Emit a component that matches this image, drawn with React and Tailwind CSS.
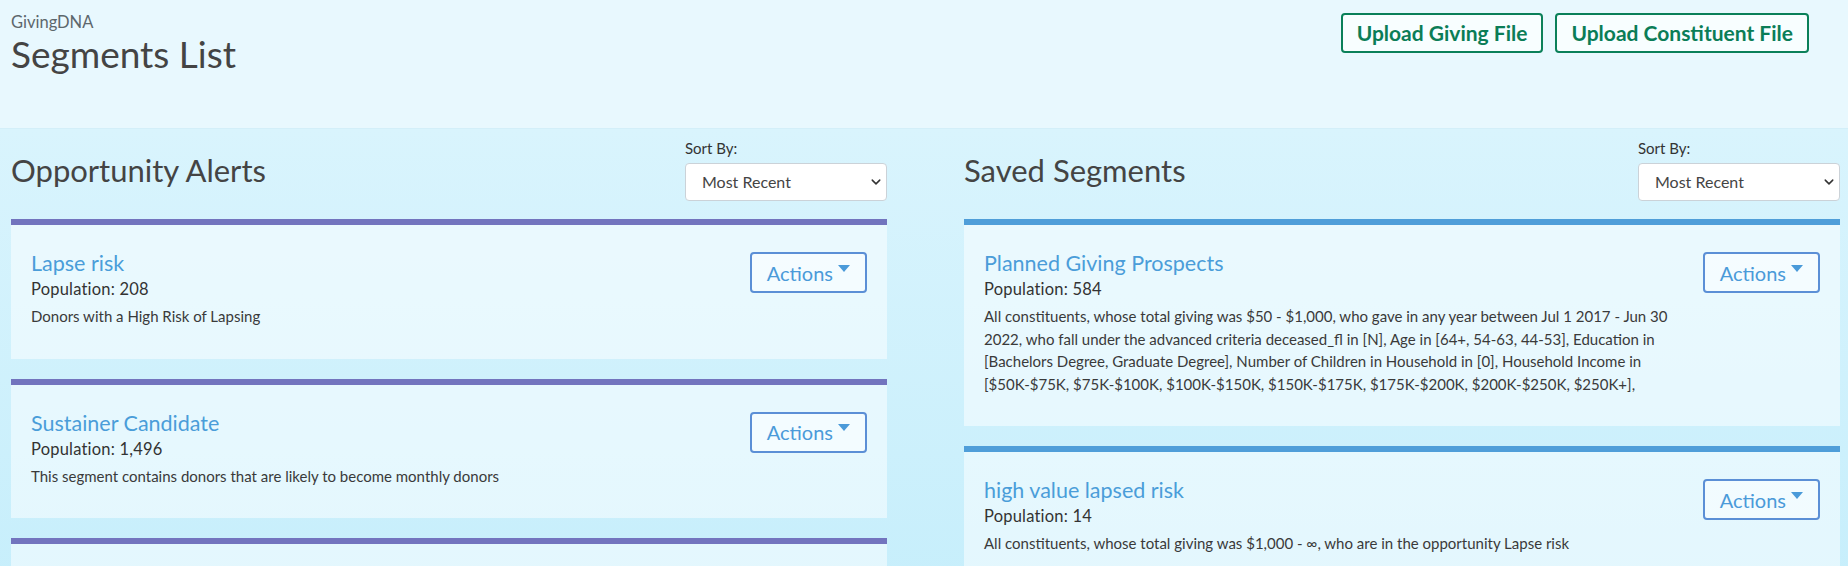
import { useState } from "react";

const opportunityAlerts = [
  {
    id: 1,
    title: "Lapse risk",
    population: "208",
    description: "Donors with a High Risk of Lapsing",
  },
  {
    id: 2,
    title: "Sustainer Candidate",
    population: "1,496",
    description:
      "This segment contains donors that are likely to become monthly donors",
  },
  {
    id: 3,
    title: "Major Gift Prospect",
    population: "312",
    description: "Donors with capacity for a major gift",
  },
];

const savedSegments = [
  {
    id: 1,
    title: "Planned Giving Prospects",
    population: "584",
    description:
      "All constituents, whose total giving was $50 - $1,000, who gave in any year between Jul 1 2017 - Jun 30 2022, who fall under the advanced criteria deceased_fl in [N], Age in [64+, 54-63, 44-53], Education in [Bachelors Degree, Graduate Degree], Number of Children in Household in [0], Household Income in [$50K-$75K, $75K-$100K, $100K-$150K, $150K-$175K, $175K-$200K, $200K-$250K, $250K+],",
  },
  {
    id: 2,
    title: "high value lapsed risk",
    population: "14",
    description:
      "All constituents, whose total giving was $1,000 - ∞, who are in the opportunity Lapse risk",
  },
];

const SortSelect = () => {
  const [sort, setSort] = useState("recent");

  return (
    <div className="w-[202px] shrink-0">
      <label className="block text-[15px] leading-[20px] text-[#333] mb-[5px]">
        Sort By:
      </label>
      <div className="relative">
        <select
          value={sort}
          onChange={(e) => setSort(e.target.value)}
          className="w-full h-[38px] appearance-none bg-white border border-[#cbd2d8] rounded-[4px] pl-[16px] pr-[28px] text-[16px] text-[#444] outline-none"
        >
          <option value="recent">Most Recent</option>
          <option value="oldest">Oldest</option>
          <option value="population">Population</option>
        </select>
        <svg
          className="absolute right-[6px] top-1/2 -translate-y-1/2 pointer-events-none"
          width="10"
          height="10"
          viewBox="0 0 16 16"
        >
          <path
            d="M2 5l6 6 6-6"
            fill="none"
            stroke="#333"
            strokeWidth="2.4"
            strokeLinecap="round"
            strokeLinejoin="round"
          />
        </svg>
      </div>
    </div>
  );
};

const SegmentCard = ({ item, barColor }) => (
  <div className="bg-white/50 mb-[20px]">
    <div className={`h-[6px] ${barColor}`} />
    <div className="flex justify-between pt-[24px] pb-[31px] px-[20px]">
      <div className="w-[692px]">
        <a
          href="#"
          className="block mt-[2px] text-[21.5px] leading-[25px] text-[#4a9dd9] no-underline"
        >
          {item.title}
        </a>
        <div className="mt-[2px] text-[16.5px] leading-[22px] tracking-[0.2px] text-[#333]">
          Population: {item.population}
        </div>
        <p className="mt-[5px] text-[15px] leading-[22.5px] text-[#3a3a3a]">
          {item.description}
        </p>
      </div>
      <div>
        <button className="mt-[3px] h-[41px] flex items-center gap-[5px] px-[15px] border-2 border-[#5b8fd6] rounded-[4px] bg-white/50 text-[20px] text-[#4a9ad9]">
          <span>Actions</span>
          <svg width="12" height="8" viewBox="0 0 12 8" className="mb-[8px]">
            <path d="M0 0h12L6 7z" fill="#4a9ad9" />
          </svg>
        </button>
      </div>
    </div>
  </div>
);

const SegmentColumn = ({ title, items, barColor }) => (
  <div className="w-[876px] shrink-0">
    {/* Column header */}
    <div className="flex justify-between items-start mb-[18px]">
      <h2 className="mt-[13px] text-[31px] leading-[38px] text-[#444]">
        {title}
      </h2>
      <SortSelect />
    </div>

    {items.map((item) => (
      <SegmentCard key={item.id} item={item} barColor={barColor} />
    ))}
  </div>
);

const App = () => {
  return (
    <div
      className="h-[566px] overflow-hidden flex flex-col"
      style={{ fontFamily: "Lato, 'Noto Sans', sans-serif" }}
    >
      {/* Header */}
      <div className="h-[129px] shrink-0 flex justify-between bg-[#e8f8fe] border-b border-[#d3eff9] pl-[11px] pr-[39px]">
        <div className="pt-[12px]">
          <div className="text-[16.5px] leading-[20px] text-[#5d676c]">
            GivingDNA
          </div>
          <h1 className="text-[37px] leading-[44px] text-[#444]">
            Segments List
          </h1>
        </div>
        <div className="flex gap-[12px] pt-[13px] items-start">
          <button className="h-[40px] px-[14px] border-2 border-[#0a8059] rounded-[4px] bg-[#f8feff] text-[21px] font-bold text-[#0b7d57]">
            Upload Giving File
          </button>
          <button className="h-[40px] px-[14px] border-2 border-[#0a8059] rounded-[4px] bg-[#f8feff] text-[21px] font-bold text-[#0b7d57]">
            Upload Constituent File
          </button>
        </div>
      </div>

      {/* Lists */}
      <div className="flex-1 flex gap-[77px] pl-[11px] pt-[9px] bg-gradient-to-b from-[#d9f4fd] to-[#c2edfb]">
        <SegmentColumn
          title="Opportunity Alerts"
          items={opportunityAlerts}
          barColor="bg-[#7274be]"
        />
        <SegmentColumn
          title="Saved Segments"
          items={savedSegments}
          barColor="bg-[#4f9ed9]"
        />
      </div>
    </div>
  );
};

export default App;
